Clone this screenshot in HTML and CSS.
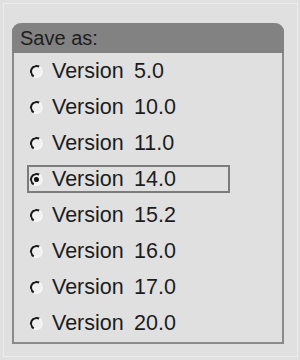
FILE: index.html
```html
<!DOCTYPE html>
<html>
<head>
<meta charset="utf-8">
<link rel="stylesheet" href="styles.css">
</head>
<body>
<div class="screen">
  <div class="panel">
    <div class="header">Save as:</div>
    <div class="list">
      <div class="row"><span class="radio"></span><span class="word">Version</span><span class="num">5.0</span></div>
      <div class="row"><span class="radio"></span><span class="word">Version</span><span class="num">10.0</span></div>
      <div class="row"><span class="radio"></span><span class="word">Version</span><span class="num">11.0</span></div>
      <div class="row selected"><span class="radio checked"></span><span class="word">Version</span><span class="num">14.0</span></div>
      <div class="row"><span class="radio"></span><span class="word">Version</span><span class="num">15.2</span></div>
      <div class="row"><span class="radio"></span><span class="word">Version</span><span class="num">16.0</span></div>
      <div class="row"><span class="radio"></span><span class="word">Version</span><span class="num">17.0</span></div>
      <div class="row"><span class="radio"></span><span class="word">Version</span><span class="num">20.0</span></div>
    </div>
  </div>
</div>
</body>
</html>
```
FILE: styles.css
```css
html, body {
  margin: 0;
  padding: 0;
  background: #e0e0e0;
}
.screen {
  width: 300px;
  height: 360px;
  box-sizing: border-box;
  padding: 23px 0 0 12px;
  border-top: 2px solid #e0e0e0;
  position: relative;
  font-family: "Liberation Sans", Arial, sans-serif;
  color: #1c1c1c;
}
.screen::before {
  content: "";
  position: absolute;
  left: 3px;
  top: 1px;
  right: 2px;
  bottom: 3px;
  border: 1px solid #ececec;
  pointer-events: none;
}
.panel {
  width: 272px;
  height: 321px;
  box-sizing: border-box;
  margin-top: -2px;
  border: 2px solid #8a8a8a;
  border-top: 0;
  border-radius: 9px 9px 0 0;
  background: #e0e0e0;
  display: flex;
  flex-direction: column;
}
.header {
  height: 30px;
  margin: 0 -2px;
  background: #828282;
  border-radius: 9px 9px 0 0;
  font-size: 20px;
  line-height: 31px;
  padding-left: 8px;
  color: #1e1e1e;
}
.list {
  display: flex;
  flex-direction: column;
}
.row {
  height: 36px;
  display: flex;
  align-items: center;
  font-size: 21.5px;
  padding-left: 16px;
  position: relative;
}
.row.selected::after {
  content: "";
  position: absolute;
  left: 13px;
  top: 4px;
  width: 203px;
  height: 28px;
  box-sizing: border-box;
  border: 2px solid #7c7c7c;
}
.radio {
  width: 13px;
  height: 13px;
  box-sizing: border-box;
  border-radius: 50%;
  border: 2px solid;
  border-color: #1a1a1a #f6f6f6 #f6f6f6 #1a1a1a;
  transform: rotate(-15deg);
  background: #efefef;
  margin-right: 9px;
  position: relative;
}
.radio.checked::after {
  content: "";
  position: absolute;
  left: 2px;
  top: 2px;
  width: 5px;
  height: 5px;
  border-radius: 50%;
  background: #111;
}
.word {
  width: 82px;
}
```
